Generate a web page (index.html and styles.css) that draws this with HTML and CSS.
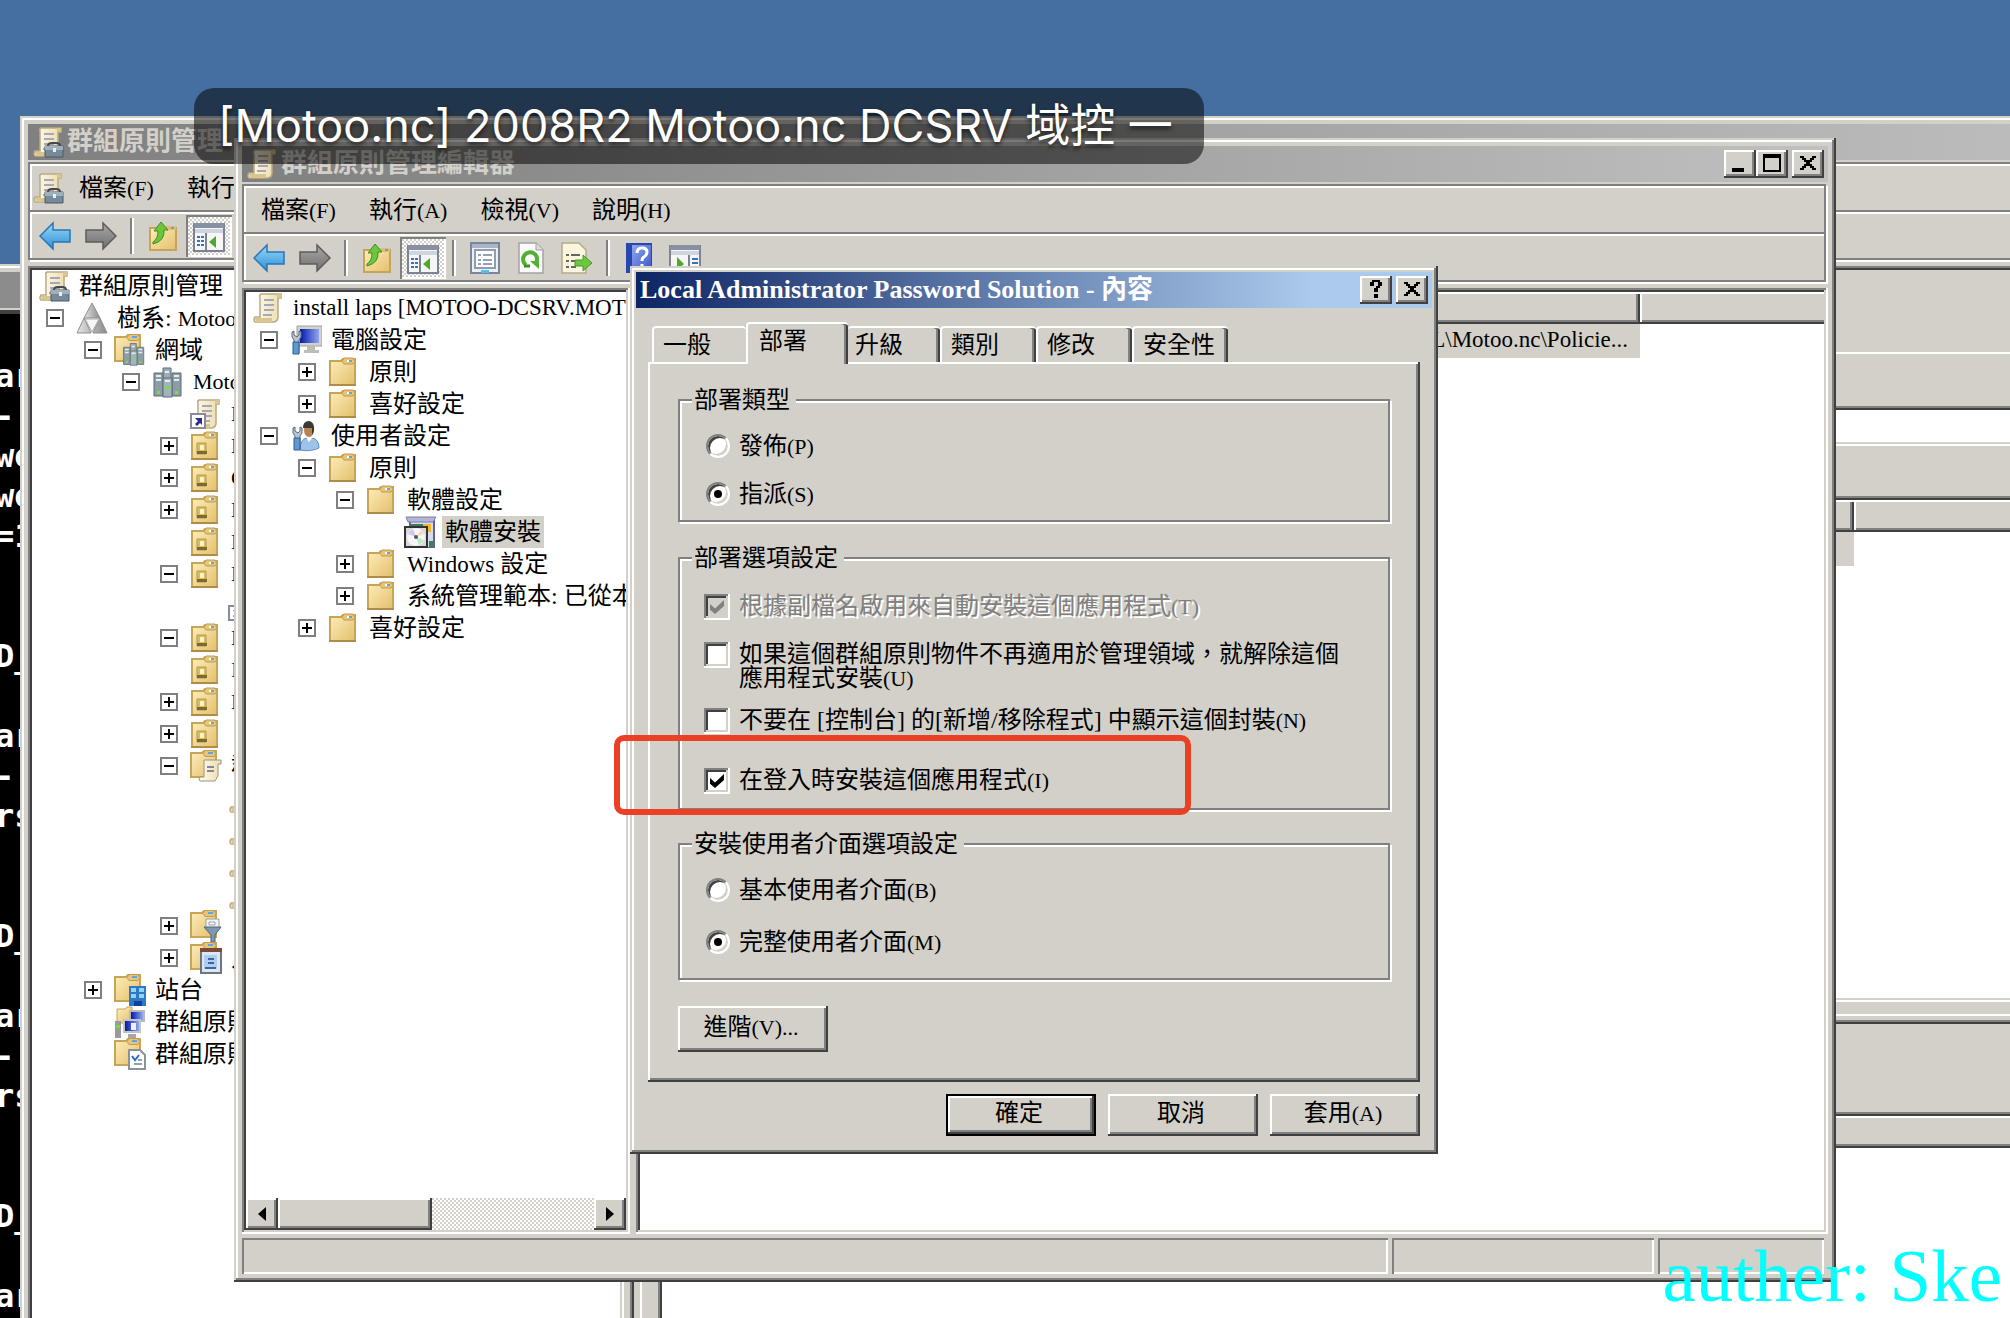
FILE: index.html
```html
<!DOCTYPE html>
<html lang="zh-Hant-TW">
<head>
<meta charset="utf-8">
<title>群組原則管理編輯器</title>
<link rel="stylesheet" href="styles.css">
</head>
<body>
<svg class="defs" aria-hidden="true">
  <defs>
    <linearGradient id="gFolder" x1="0" y1="0" x2="1" y2="1"><stop offset="0" stop-color="#fdeebb"/><stop offset="1" stop-color="#e3bf6c"/></linearGradient>
    <linearGradient id="gBlue" x1="0" y1="0" x2="0" y2="1"><stop offset="0" stop-color="#9bd8f8"/><stop offset="1" stop-color="#2b8fd8"/></linearGradient>
    <linearGradient id="gGray" x1="0" y1="0" x2="0" y2="1"><stop offset="0" stop-color="#a8a8a8"/><stop offset="1" stop-color="#6f6f6f"/></linearGradient>
    <linearGradient id="gScreen" x1="0" y1="0" x2="1" y2="0"><stop offset="0" stop-color="#0418a8"/><stop offset="1" stop-color="#8fa8f0"/></linearGradient>
    <linearGradient id="gPaper" x1="0" y1="0" x2="1" y2="0"><stop offset="0" stop-color="#fffdf0"/><stop offset="1" stop-color="#ecdcae"/></linearGradient>
    <linearGradient id="gHelp" x1="0" y1="0" x2="1" y2="1"><stop offset="0" stop-color="#8fa6ee"/><stop offset="1" stop-color="#3a58c8"/></linearGradient>
    <linearGradient id="gTri" x1="0" y1="0" x2="1" y2="0"><stop offset="0" stop-color="#e4e4e4"/><stop offset="1" stop-color="#8a8a8a"/></linearGradient>
  </defs>
  <symbol id="folder" viewBox="0 0 32 32">
    <path d="M2 5h11l2-2h12v26H2z" fill="url(#gFolder)" stroke="#c8a458" stroke-width="2"/>
    <path d="M14 5.500l2-3.500h9l2 3.500-2 2.500h-9z" fill="#e6c47a" stroke="#c39b4c"/>
    <path d="M19 4h5v2h-5z" fill="#5fa5e6"/><path d="M19 4h2v2h-2z" fill="#fff"/>
    <path d="M1 28h27v2H1z" fill="#b08c48"/>
  </symbol>
  <symbol id="folder-small" viewBox="0 0 32 32">
    <path d="M1 3h11l2-2h12v26H1z" fill="url(#gFolder)" stroke="#c8a458" stroke-width="2"/>
    <path d="M13 3.500l2-3h8l3 3-2 3h-9z" fill="#e6c47a" stroke="#c39b4c"/>
    <path d="M18 2h5v2h-5z" fill="#5fa5e6"/>
  </symbol>
  <symbol id="folder-ou" viewBox="0 0 32 32">
    <use href="#folder"/>
    <path d="M7 13h9v11H7z" fill="#d8bb62" stroke="#b89a4a"/><path d="M10 15h4v5h-4z" fill="#fff6c4"/><path d="M7 21h10v3H7z" fill="#7d6a2c"/>
  </symbol>
  <symbol id="scroll" viewBox="0 0 32 32">
    <path d="M9 2h20v4h-3v20q-1 4-5 4H3q-2-2 0-5h5V6q-1-3 1-4z" fill="url(#gPaper)" stroke="#b9ab84" stroke-width="1.500"/>
    <path d="M25 2h4v4h-4zM3 26h17v4H4z" fill="#d8c68c"/>
    <path d="M12 8h10M12 13h10M12 18h10M11 23h9" stroke="#a7a7b8" stroke-width="2"/>
  </symbol>
  <symbol id="scroll-box" viewBox="0 0 32 32">
    <use href="#scroll"/>
    <path d="M16 20q0-3 4-3h4q4 0 4 3" fill="none" stroke="#404850" stroke-width="2"/>
    <path d="M13 20h18v11H13z" fill="#77899a" stroke="#4a5866"/><path d="M13 20h18v4H13z" fill="#9fb0bd"/><path d="M21 22h3v4h-3z" fill="#e8eef2"/>
  </symbol>
  <symbol id="scroll-link" viewBox="0 0 32 32">
    <use href="#scroll"/>
    <path d="M1 16h14v14H1z" fill="#fff" stroke="#8a8a9a" stroke-width="2"/><path d="M5 20h7v7l-2-2-3 3-2-2 3-3z" fill="#2b2b8c"/>
  </symbol>
  <symbol id="folder-scroll" viewBox="0 0 32 32">
    <use href="#folder-small"/>
    <path d="M14 10h17v4h-3v12l-3 5H10q-2-2 0-4h4z" fill="url(#gPaper)" stroke="#9c9480"/><path d="M17 17h7M17 21h7" stroke="#85859c" stroke-width="2"/>
  </symbol>
  <symbol id="folder-filter" viewBox="0 0 32 32">
    <use href="#folder-small"/>
    <path d="M16 9h13v9H16z" fill="#f4f4f4" stroke="#a0a0a0"/><path d="M19 12h6v3h-6z" fill="none" stroke="#a0a0b0"/>
    <path d="M14 17h17l-6 8v7h-4v-7z" fill="#7b98ae" stroke="#4e6679"/>
  </symbol>
  <symbol id="folder-starter" viewBox="0 0 32 32">
    <use href="#folder-small"/>
    <path d="M11 8h20v23H11z" fill="#dfe6ee" stroke="#6b7585" stroke-width="2"/><path d="M10 6h22v4H10z" fill="#7a4a3a"/><path d="M14 13h13v14H14z" fill="#aecdf0"/><path d="M18 17h6M18 21h6M15 26h11" stroke="#3b66a6" stroke-width="2"/>
  </symbol>
  <symbol id="folder-site" viewBox="0 0 32 32">
    <use href="#folder-small"/>
    <path d="M15 12h17v20H15z" fill="#2f78c8"/><path d="M17 14h5v4h-5zM25 14h5v4h-5zM17 20h5v4h-5zM25 20h5v4h-5z" fill="#8fd6f2"/><path d="M20 27h8v5h-8z" fill="#123f9a"/>
  </symbol>
  <symbol id="folder-result" viewBox="0 0 32 32">
    <use href="#folder-small"/>
    <path d="M15 12h11l5 5v14H15z" fill="#fff" stroke="#8a929a" stroke-width="2"/><path d="M18 18l3 4 4-5" fill="none" stroke="#2b6cc0" stroke-width="2"/><path d="M20 26h8M24 22h4" stroke="#8da2b8" stroke-width="2"/>
  </symbol>
  <symbol id="modeling" viewBox="0 0 32 32">
    <path d="M3 3h8l2-2h5v16H3z" fill="url(#gFolder)" stroke="#c8a458"/>
    <path d="M15 4h16v12H15z" fill="#b8b8b8"/><path d="M17 6h12v8H17z" fill="url(#gScreen)"/>
    <path d="M9 13h18v14H9z" fill="#c4c4c4"/><path d="M11 15h14v10H11z" fill="url(#gScreen)"/><path d="M17 17h5v7h-5z" fill="#eef"/>
    <path d="M14 28h8v4h-8z" fill="#a8a8a8"/><path d="M1 15h6v17H1z" fill="#9a9a9a"/><path d="M2 19h4v3H2z" fill="#6fe040"/>
  </symbol>
  <symbol id="forest" viewBox="0 0 32 32">
    <path d="M16 1l8 15H8z" fill="url(#gTri)" stroke="#8f8f8f"/><path d="M8 16l7 15H1zM24 16l7 15H17z" fill="url(#gTri)" stroke="#8f8f8f"/><path d="M9 17h14l-7 13z" fill="#f6f6f6" stroke="#aaa"/>
  </symbol>
  <symbol id="servers" viewBox="0 0 32 32">
    <g stroke="#5d6d76"><path d="M11 2h8v24h-8z" fill="#9dacb4"/><path d="M2 7h9v23H2zM20 7h9v23h-9z" fill="#8c9da6"/><path d="M11 12h9v19h-9z" fill="#a3b3bb"/></g>
    <path d="M4 10h5M4 14h5M22 10h5M22 14h5M13 15h5M13 6h4" stroke="#e4edf1" stroke-width="2"/>
    <path d="M5 25h3v3H5zM23 25h3v3h-3zM14 20h3v3h-3z" fill="#70e23a"/>
  </symbol>
  <symbol id="folder-servers" viewBox="0 0 32 32">
    <use href="#folder-small"/><use href="#servers" x="8" y="8" width="24" height="24"/>
  </symbol>
  <symbol id="wrench" viewBox="0 0 12 32">
    <path d="M2 8v5l2 3v13h5V16l2-3V8L9 7v4l-2 2-3-2V7z" fill="#b9c4cf" stroke="#5b6b7c"/><path d="M3 18h6v12H3z" fill="#5e9ad0" stroke="#2e5c90"/>
  </symbol>
  <symbol id="computer" viewBox="0 0 32 32">
    <path d="M7 2h25v20H7z" fill="#d2d2cc" stroke="#a2a29c"/><path d="M10 5h19v14H10z" fill="url(#gScreen)"/><path d="M17 22h8v4h4v3H14v-3h3z" fill="#bdbdb6"/>
    <use href="#wrench" x="0" y="0" width="12" height="32"/>
  </symbol>
  <symbol id="user" viewBox="0 0 32 32">
    <path d="M10 30q0-11 7-12h5q7 1 7 10-8 4-19 2z" fill="#9dc3ea" stroke="#5f8fc4"/><path d="M16 17l3 5 4-5z" fill="#fff"/>
    <ellipse cx="19" cy="10" rx="5" ry="7" fill="#b98252"/><path d="M13 8q0-7 6-7 6 1 5 10l-2 4V8q-4 0-9 0z" fill="#3a3a34"/>
    <use href="#wrench" x="1" y="0" width="12" height="32"/>
  </symbol>
  <symbol id="software" viewBox="0 0 32 32">
    <path d="M6 4h24v28H6z" fill="#d6daf4" stroke="#62628e" stroke-width="2"/><path d="M2 1h30l-3 5H4z" fill="#b5b6d6" stroke="#7b7ca8"/><path d="M5 8h16v4H5z" fill="#3e7d58"/><path d="M19 8h8v8h-8z" fill="#f1b62c"/><path d="M25 25h4v6h-4z" fill="#3e8050"/>
    <path d="M1 11h22v20H1z" fill="#d9d9d9" stroke="#333" stroke-width="2"/><circle cx="12" cy="21" r="9" fill="#f7f7f7"/><path d="M12 21l-8-3a8 8 0 0 1 5-5z" fill="#d8c4ee"/><path d="M12 21l8 3a8 8 0 0 1-5 5z" fill="#bdeccb"/><path d="M12 21l5-7a8 8 0 0 1 3 4z" fill="#f6d5c2"/><circle cx="12" cy="21" r="2" fill="#555"/>
  </symbol>
  <symbol id="back" viewBox="0 0 32 32"><path d="M1 16L14 3v7h17v12H14v7z" fill="url(#gBlue)" stroke="#2876b4" stroke-width="1.500"/></symbol>
  <symbol id="forward" viewBox="0 0 32 32"><path d="M31 16L18 3v7H1v12h17v7z" fill="url(#gGray)" stroke="#5c5c5c" stroke-width="1.500"/></symbol>
  <symbol id="up" viewBox="0 0 32 32">
    <path d="M3 8h26v22H3z" fill="url(#gFolder)" stroke="#c8a458" stroke-width="2"/><path d="M18 6h11v4H18z" fill="#e0bd70"/><path d="M24 7h3v2h-3z" fill="#5fa5e6"/>
    <path d="M6 22q5-3 5-11H7l7-9 7 8h-4q1 11-11 14z" fill="#6cc63c" stroke="#3d8f1c"/>
  </symbol>
  <symbol id="tree-pane" viewBox="0 0 32 32">
    <path d="M1 4h30v27H1z" fill="#f6f6f6" stroke="#7a8494" stroke-width="2"/><path d="M1 3h30v5H1z" fill="#8791a3"/><path d="M2 9h28v4H2z" fill="#cfd5df"/><path d="M13 13v17" stroke="#7a8494" stroke-width="2"/><path d="M4 17h3M4 21h3M4 25h3M8 17h3M8 21h3M8 25h3" stroke="#3a72b8" stroke-width="2"/><path d="M16 22l7-6v12z" fill="#4faa2c"/>
  </symbol>
  <symbol id="action-pane" viewBox="0 0 32 32">
    <path d="M1 4h30v27H1z" fill="#f6f6f6" stroke="#7a8494" stroke-width="2"/><path d="M1 3h30v5H1z" fill="#8791a3"/><path d="M2 9h28v4H2z" fill="#cfd5df"/><path d="M20 13v17" stroke="#7a8494" stroke-width="2"/><path d="M23 17h6M23 21h6" stroke="#3a72b8" stroke-width="2"/><path d="M15 22l-7-7v13z" fill="#4faa2c"/>
  </symbol>
  <symbol id="props" viewBox="0 0 32 32">
    <path d="M2 1h28v30H2z" fill="#eceff3" stroke="#7a8698" stroke-width="2"/><path d="M3 2h26v4H3z" fill="#aab4c6"/><path d="M6 8h20v18H6z" fill="#fff" stroke="#8f9db2" stroke-width="2"/><path d="M9 13h3M9 18h3M9 22h3M14 13h9M14 18h9M14 22h9" stroke="#8fa0b8" stroke-width="2"/><path d="M12 28h8v3h-8z" fill="#4ec2ee"/>
  </symbol>
  <symbol id="refresh" viewBox="0 0 32 32">
    <path d="M4 1h17l7 7v23H4z" fill="#fafafa" stroke="#a2a2a2" stroke-width="1.500"/><path d="M21 1v7h7" fill="#ddd" stroke="#a2a2a2"/><path d="M11 23a7 7 0 1 1 10-2" fill="none" stroke="#53b032" stroke-width="4"/><path d="M15 19h9v8z" fill="#53b032"/><path d="M9 24h6" stroke="#3d8f1c" stroke-width="3"/>
  </symbol>
  <symbol id="export" viewBox="0 0 32 32">
    <path d="M1 1h17l7 7v23H1z" fill="#fbf5de" stroke="#b6ab86" stroke-width="1.500"/><path d="M5 13h3M5 19h3M5 25h3M10 13h9M10 19h5M10 25h5" stroke="#666" stroke-width="2"/><path d="M14 18h8v-5l9 8-9 8v-5h-8z" fill="#6dc63f" stroke="#4a9b26"/>
  </symbol>
  <symbol id="help" viewBox="0 0 32 32">
    <path d="M3 1h26v30H3z" fill="#2846b0"/><path d="M9 3h19v26H9z" fill="url(#gHelp)"/><path d="M14 11q0-5 5-5 5 0 5 4 0 3-3 5-2 1-2 4M19 22v3" fill="none" stroke="#fff" stroke-width="3"/>
  </symbol>
  <symbol id="glyph-close" viewBox="0 0 16 14"><path d="M0 0h4v2h2v2h4V2h2V0h4v2h-2v2h-2v2h-2v2h2v2h2v2h2v2h-4v-2h-2v-2H6v2H4v2H0v-2h2v-2h2V8h2V6H4V4H2V2H0z" fill="#000"/></symbol>
  <symbol id="glyph-max" viewBox="0 0 18 18"><path d="M0 0h18v18H0zM2 4v12h14V4z" fill="#000" fill-rule="evenodd"/></symbol>
  <symbol id="glyph-help" viewBox="0 0 12 18"><path d="M0 2h2V0h8v2h2v4h-2v2H8v4H4V8h2V6h2V2H4v4H0zM4 14h4v4H4z" fill="#000" fill-rule="evenodd"/></symbol>
</svg>

<main class="desktop">

  <section class="window console">
    <div class="console-title"></div>
<pre class="console-text">

ar
-
we
we
=1


D_

ar
-
rs


D_

ar
-
rs


D_

ar</pre>
  </section>

  <section class="window manager">
    <header class="titlebar"><svg class="icon"><use href="#scroll-box"/></svg><h2>群組原則管理</h2></header>
    <div class="bars">
      <nav class="menubar menubar-icon"><svg class="icon"><use href="#scroll-box"/></svg><button>檔案<span class="key">(F)</span></button><button>執行</button></nav>
      <div class="toolbar">
        <button aria-label="上一頁"><svg class="icon"><use href="#back"/></svg></button>
        <button aria-label="下一頁"><svg class="icon"><use href="#forward"/></svg></button>
        <i class="sep"></i>
        <button aria-label="上移一層"><svg class="icon"><use href="#up"/></svg></button>
        <button class="pressed" aria-label="主控台樹狀目錄"><svg class="icon"><use href="#tree-pane"/></svg></button>
      </div>
    </div>
    <div class="panes">
      <div class="sunken tree-pane">
        <ul class="tree">
          <li class="l0"><svg class="icon"><use href="#scroll-box"/></svg><span>群組原則管理</span></li>
          <li class="l1"><i class="box minus"></i><svg class="icon"><use href="#forest"/></svg><span>樹系: <span class="key">Motoo</span></span></li>
          <li class="l2"><i class="box minus"></i><svg class="icon"><use href="#folder-servers"/></svg><span>網域</span></li>
          <li class="l3"><i class="box minus"></i><svg class="icon"><use href="#servers"/></svg><span class="key">Motoo</span></li>
          <li class="l4"><svg class="icon"><use href="#scroll-link"/></svg><span class="key">D</span></li>
          <li class="l4"><i class="box plus"></i><svg class="icon"><use href="#folder-ou"/></svg><span class="key">D</span></li>
          <li class="l4"><i class="box plus"></i><svg class="icon"><use href="#folder-ou"/></svg><span class="key">C</span></li>
          <li class="l4"><i class="box plus"></i><svg class="icon"><use href="#folder-ou"/></svg><span class="key">D</span></li>
          <li class="l4"><svg class="icon"><use href="#folder-ou"/></svg><span class="key">D</span></li>
          <li class="l4"><i class="box minus"></i><svg class="icon"><use href="#folder-ou"/></svg><span class="key">D</span></li>
          <li class="l5"><svg class="icon"><use href="#scroll-link"/></svg></li>
          <li class="l4"><i class="box minus"></i><svg class="icon"><use href="#folder-ou"/></svg><span class="key">D</span></li>
          <li class="l4"><svg class="icon"><use href="#folder-ou"/></svg><span class="key">I</span></li>
          <li class="l4"><i class="box plus"></i><svg class="icon"><use href="#folder-ou"/></svg><span class="key">D</span></li>
          <li class="l4"><i class="box plus"></i><svg class="icon"><use href="#folder-ou"/></svg></li>
          <li class="l4"><i class="box minus"></i><svg class="icon"><use href="#folder-scroll"/></svg><span>群</span></li>
          <li class="l5"><svg class="icon"><use href="#scroll"/></svg></li>
          <li class="l5"><svg class="icon"><use href="#scroll"/></svg></li>
          <li class="l5"><svg class="icon"><use href="#scroll"/></svg></li>
          <li class="l5"><svg class="icon"><use href="#scroll"/></svg></li>
          <li class="l4"><i class="box plus"></i><svg class="icon"><use href="#folder-filter"/></svg></li>
          <li class="l4"><i class="box plus"></i><svg class="icon"><use href="#folder-starter"/></svg><span>入</span></li>
          <li class="l2"><i class="box plus"></i><svg class="icon"><use href="#folder-site"/></svg><span>站台</span></li>
          <li class="l2"><svg class="icon"><use href="#modeling"/></svg><span>群組原則</span></li>
          <li class="l2"><svg class="icon"><use href="#folder-result"/></svg><span>群組原則</span></li>
        </ul>
      </div>
      <div class="sunken details">
        <div class="details-head"></div>
        <div class="sheet links">
          <div class="sheet-gap"></div>
          <div class="sunken location"></div>
          <div class="list-gap"></div>
          <div class="sunken link-list">
            <div class="colhead"><i></i><i></i></div>
            <div class="row-mark"></div>
          </div>
        </div>
        <div class="sheet filters">
          <div class="sunken filter-list">
            <div class="filter-note"></div>
            <div class="colhead"><i></i></div>
          </div>
        </div>
      </div>
    </div>
  </section>

  <section class="window editor">
    <header class="titlebar">
      <svg class="icon"><use href="#scroll"/></svg><h2>群組原則管理編輯器</h2>
      <div class="caption-buttons">
        <button aria-label="最小化"><i class="min"></i></button><button aria-label="最大化"><svg class="max"><use href="#glyph-max"/></svg></button><button class="close" aria-label="關閉"><svg><use href="#glyph-close"/></svg></button>
      </div>
    </header>
    <div class="bars">
      <nav class="menubar"><button>檔案<span class="key">(F)</span></button><button>執行<span class="key">(A)</span></button><button>檢視<span class="key">(V)</span></button><button>說明<span class="key">(H)</span></button></nav>
      <div class="toolbar">
        <button aria-label="上一頁"><svg class="icon"><use href="#back"/></svg></button>
        <button aria-label="下一頁"><svg class="icon"><use href="#forward"/></svg></button>
        <i class="sep"></i>
        <button aria-label="上移一層"><svg class="icon"><use href="#up"/></svg></button>
        <button class="pressed" aria-label="主控台樹狀目錄"><svg class="icon"><use href="#tree-pane"/></svg></button>
        <i class="sep"></i>
        <button aria-label="內容"><svg class="icon"><use href="#props"/></svg></button>
        <button aria-label="重新整理"><svg class="icon"><use href="#refresh"/></svg></button>
        <button aria-label="匯出清單"><svg class="icon"><use href="#export"/></svg></button>
        <i class="sep"></i>
        <button aria-label="說明"><svg class="icon"><use href="#help"/></svg></button>
        <button aria-label="執行窗格"><svg class="icon"><use href="#action-pane"/></svg></button>
      </div>
    </div>
    <div class="panes">
      <div class="sunken tree-pane">
        <ul class="tree">
          <li class="l0"><svg class="icon"><use href="#scroll"/></svg><span class="wide">install laps [MOTOO-DCSRV.MOT</span></li>
          <li class="l1"><i class="box minus"></i><svg class="icon"><use href="#computer"/></svg><span>電腦設定</span></li>
          <li class="l2"><i class="box plus"></i><svg class="icon"><use href="#folder"/></svg><span>原則</span></li>
          <li class="l2"><i class="box plus"></i><svg class="icon"><use href="#folder"/></svg><span>喜好設定</span></li>
          <li class="l1"><i class="box minus"></i><svg class="icon"><use href="#user"/></svg><span>使用者設定</span></li>
          <li class="l2"><i class="box minus"></i><svg class="icon"><use href="#folder"/></svg><span>原則</span></li>
          <li class="l3"><i class="box minus"></i><svg class="icon"><use href="#folder"/></svg><span>軟體設定</span></li>
          <li class="l4"><svg class="icon"><use href="#software"/></svg><span class="selected">軟體安裝</span></li>
          <li class="l3"><i class="box plus"></i><svg class="icon"><use href="#folder"/></svg><span><span class="wide">Windows</span> 設定</span></li>
          <li class="l3"><i class="box plus"></i><svg class="icon"><use href="#folder"/></svg><span>系統管理範本: 已從本</span></li>
          <li class="l2"><i class="box plus"></i><svg class="icon"><use href="#folder"/></svg><span>喜好設定</span></li>
        </ul>
        <div class="hscroll">
          <button aria-label="向左捲動"><i class="arrow-left"></i></button>
          <div class="thumb"></div>
          <div class="track"></div>
          <button aria-label="向右捲動"><i class="arrow-right"></i></button>
        </div>
      </div>
      <div class="sunken packages">
        <div class="colhead"><i></i><i></i></div>
        <div class="package-row"><span class="wide">L\Motoo.nc\Policie...</span></div>
      </div>
    </div>
    <footer class="statusbar"><div></div><div></div><div></div></footer>
  </section>

  <form class="window dialog">
    <header class="titlebar">
      <h2>Local Administrator Password Solution - 內容</h2>
      <div class="caption-buttons">
        <button type="button" aria-label="說明"><svg class="ask"><use href="#glyph-help"/></svg></button><button type="button" class="close" aria-label="關閉"><svg><use href="#glyph-close"/></svg></button>
      </div>
    </header>
    <div class="dialog-body">
      <div class="tabs" role="tablist">
        <button type="button" role="tab">一般</button><button type="button" role="tab" class="active" aria-selected="true">部署</button><button type="button" role="tab">升級</button><button type="button" role="tab">類別</button><button type="button" role="tab">修改</button><button type="button" role="tab">安全性</button>
      </div>
      <div class="tab-page">
        <fieldset class="type">
          <legend>部署類型</legend>
          <label><input type="radio" name="type"><span>發佈<span class="key">(P)</span></span></label>
          <label><input type="radio" name="type" checked><span>指派<span class="key">(S)</span></span></label>
        </fieldset>
        <fieldset class="options">
          <legend>部署選項設定</legend>
          <label class="disabled"><input type="checkbox" checked disabled><span>根據副檔名啟用來自動安裝這個應用程式<span class="key">(T)</span></span></label>
          <label><input type="checkbox"><span>如果這個群組原則物件不再適用於管理領域，就解除這個應用程式安裝<span class="key">(U)</span></span></label>
          <label><input type="checkbox"><span>不要在 [控制台] 的[新增/移除程式] 中顯示這個封裝<span class="key">(N)</span></span></label>
          <label class="logon"><input type="checkbox" checked><span>在登入時安裝這個應用程式<span class="key">(I)</span></span></label>
        </fieldset>
        <fieldset class="ui">
          <legend>安裝使用者介面選項設定</legend>
          <label><input type="radio" name="ui"><span>基本使用者介面<span class="key">(B)</span></span></label>
          <label><input type="radio" name="ui" checked><span>完整使用者介面<span class="key">(M)</span></span></label>
        </fieldset>
        <button type="button" class="push advanced">進階<span class="key">(V)...</span></button>
      </div>
      <div class="actions">
        <button type="button" class="push default">確定</button>
        <button type="button" class="push">取消</button>
        <button type="button" class="push">套用<span class="key">(A)</span></button>
      </div>
    </div>
  </form>

  <div class="highlight"></div>
  <div class="banner">[Motoo.nc] 2008R2 Motoo.nc DCSRV 域控 一</div>
  <div class="watermark">auther: Ske</div>
</main>
</body>
</html>
```
FILE: styles.css
```css
:root {
  --face: #d3d0c9;
  --shade: #808080;
  --dark: #404040;
  --light: #ffffff;
}

* { box-sizing: border-box; }

body {
  margin: 0;
  font-family: "Liberation Serif", "Noto Sans CJK TC", serif;
  font-size: 24px;
  line-height: 24px;
  color: #000;
}

button, input { font: inherit; color: inherit; margin: 0; }
button { padding: 0; border: 0; background: none; white-space: nowrap; }
h2 { margin: 0; font-size: 26px; line-height: 36px; white-space: nowrap; }

.key { font-size: 22px; line-height: 0; }
.wide { font-size: 23px; line-height: 0; }
.defs { position: absolute; width: 0; height: 0; }
.icon { display: block; flex: none; width: 32px; height: 32px; }

.desktop {
  position: relative;
  height: 100vh;
  overflow: hidden;
  background: #456fa1;
}

/* Windows */
.window {
  position: absolute;
  display: flex;
  flex-direction: column;
  padding: 8px;
  background: var(--face);
  box-shadow: inset -2px -2px var(--dark), inset 2px 2px var(--face), inset -4px -4px var(--shade), inset 4px 4px var(--light);
}

.console { left: -200px; top: 264px; width: 800px; bottom: -40px; }
.manager { left: 20px; top: 116px; right: -160px; bottom: -40px; }
.editor { left: 234px; top: 138px; width: 1602px; height: 1144px; }
.dialog { left: 630px; top: 266px; width: 808px; padding: 6px 6px 4px; }

.titlebar {
  display: flex;
  align-items: center;
  flex: none;
  height: 36px;
  padding: 0 4px;
  gap: 3px;
  color: var(--face);
  background: linear-gradient(90deg, #808080, #c0c0c0);
}
.dialog .titlebar { color: #fff; background: linear-gradient(90deg, #0e2564, #abcaec 85%); }

.caption-buttons { display: flex; margin-left: auto; }
.caption-buttons button {
  display: flex;
  align-items: center;
  justify-content: center;
  width: 32px;
  height: 28px;
  padding: 0 0 2px;
}
.caption-buttons .close { margin-left: 4px; }
.caption-buttons svg { width: 16px; height: 14px; }
.caption-buttons .max { width: 18px; height: 18px; }
.caption-buttons .ask { width: 12px; height: 18px; }
.min { width: 12px; height: 4px; margin: 14px 4px 0 0; background: #000; }

.caption-buttons button, .push, .hscroll button, .thumb {
  background: var(--face);
  box-shadow: inset -2px -2px var(--dark), inset 2px 2px var(--light), inset -4px -4px var(--shade);
}

.sunken {
  padding: 4px;
  background: #fff;
  box-shadow: inset -2px -2px var(--light), inset 2px 2px var(--shade), inset -4px -4px var(--face), inset 4px 4px var(--dark);
}

/* Console */
.console {
  padding: 8px 0;
  background: linear-gradient(var(--face) 2px, #fff 2px 4px, var(--face) 4px 46px, var(--dark) 46px 50px, #000 50px);
  box-shadow: none;
}
.console-title { flex: none; height: 36px; background: #8c8c8c; }
.console-text {
  margin: 8px 0 0 195px;
  font: bold 32px/40px "DejaVu Sans Mono", monospace;
  color: #fff;
}

/* Menu and tool bars */
.bars {
  flex: none;
  margin: 2px 2px 6px 0;
  border: 2px solid var(--shade);
  box-shadow: 2px 2px var(--light), inset 2px 2px var(--light);
}
.menubar {
  display: flex;
  align-items: center;
  gap: 33px;
  height: 46px;
  padding: 2px 17px 0;
}
.menubar-icon { padding-left: 2px; }
.menubar-icon .icon { margin-right: -18px; }
.toolbar {
  display: flex;
  align-items: center;
  height: 48px;
  padding: 2px 2px 0;
  border-top: 2px solid var(--shade);
  box-shadow: inset 0 2px var(--light);
}
.toolbar button { display: flex; align-items: center; justify-content: center; flex: none; width: 46px; height: 42px; }
.toolbar .pressed {
  background: repeating-conic-gradient(#fff 0 25%, var(--face) 0 50%) 0 0 / 4px 4px;
  box-shadow: inset 2px 2px var(--shade), inset -2px -2px var(--light);
}
.sep { flex: none; width: 4px; height: 36px; margin: 0 6px; border-left: 2px solid var(--shade); border-right: 2px solid var(--light); }

/* Panes */
.panes { display: flex; flex: 1; gap: 6px; min-height: 0; }
.tree-pane { display: flex; flex: none; flex-direction: column; justify-content: space-between; width: 596px; }
.editor .tree-pane { width: 388px; }
.editor .panes { margin-bottom: 4px; }

.tree { margin: 0; padding: 0; list-style: none; overflow: hidden; }
.tree li { display: flex; align-items: center; height: 32px; white-space: nowrap; }
.tree li > span { margin-left: 6px; padding: 0 3px; line-height: 32px; }
.tree .selected { background: var(--face); }
.l0 { padding-left: 6px; }
.l1 { padding-left: 44px; }
.l2 { padding-left: 82px; }
.l3 { padding-left: 120px; }
.l4 { padding-left: 158px; }
.l5 { padding-left: 196px; }

.box {
  flex: none;
  width: 18px;
  height: 18px;
  margin: 0 12px 0 -30px;
  border: 2px solid var(--shade);
  background: linear-gradient(#000, #000) center / 10px 2px no-repeat;
}
.plus { background: linear-gradient(#000, #000) center / 10px 2px no-repeat, linear-gradient(#000, #000) center / 2px 10px no-repeat; }

.hscroll { display: flex; flex: none; height: 32px; }
.hscroll button { display: flex; align-items: center; justify-content: center; width: 32px; height: 32px; }
.thumb { width: 154px; }
.track { flex: 1; background: repeating-conic-gradient(#fff 0 25%, var(--face) 0 50%) 0 0 / 4px 4px; }
.arrow-left, .arrow-right { width: 8px; height: 14px; background: #000; clip-path: polygon(0 50%, 100% 0, 100% 100%); }
.arrow-right { clip-path: polygon(0 0, 100% 50%, 0 100%); }

.packages { flex: 1; min-width: 0; }
.colhead { display: flex; height: 32px; background: var(--face); }
.colhead i { box-shadow: inset 0 -2px var(--dark), inset 0 2px var(--light), inset 2px 0 var(--light), inset -2px 0 var(--dark), inset -4px -4px var(--shade); }
.colhead i:first-child { width: 1000px; }
.colhead i:last-child { flex: 1; box-shadow: inset 0 -2px var(--dark), inset 0 2px var(--light), inset 2px 0 var(--light), inset 0 -4px var(--shade); }
.package-row { width: 1000px; height: 34px; padding: 0 12px; line-height: 30px; text-align: right; background: var(--face); }

.statusbar { display: flex; gap: 4px; flex: none; height: 36px; margin-right: 4px; }
.statusbar div { width: 262px; box-shadow: inset 2px 2px var(--shade), inset -2px -2px var(--light); }
.statusbar div:first-child { flex: 1; }
.statusbar div:last-child { width: 166px; }

/* Link details of the management console */
.details { display: flex; flex: 1; flex-direction: column; padding: 4px 10px; background: var(--face); min-width: 0; }
.details-head { height: 82px; }
.sheet { border: solid var(--light); border-width: 2px 0 0 2px; padding: 0 16px; }
.links { height: 662px; }
.sheet-gap { height: 52px; }
.location { height: 40px; }
.list-gap { height: 50px; }
.link-list { height: 506px; }
.link-list .colhead i:first-child { width: 1192px; }
.row-mark { width: 1192px; height: 34px; background: var(--face); }
.filters { flex: 1; padding-top: 4px; }
.filter-list { height: 100%; }
.filter-note { height: 92px; background: var(--face); box-shadow: inset 0 -2px var(--dark), inset 0 -4px var(--shade); }

/* Property sheet */
.dialog-body { padding: 14px 12px; }
.tabs { display: flex; align-items: flex-end; height: 40px; padding-left: 4px; }
.tabs button {
  width: 96px;
  height: 36px;
  padding-left: 9px;
  text-align: left;
  border-top: 2px solid var(--light);
  border-left: 2px solid var(--light);
  border-radius: 4px 4px 0 0;
  box-shadow: inset -2px 0 var(--dark), inset -4px 0 var(--shade);
}
.tabs button:first-child { width: 94px; box-shadow: none; }
.tabs .active {
  position: relative;
  width: 102px;
  height: 42px;
  margin-bottom: -2px;
  padding: 0 0 6px 11px;
  background: var(--face);
}
.tabs .active + button { width: 92px; border-left: 0; padding-left: 7px; }
.tab-page {
  display: flex;
  flex-direction: column;
  align-items: stretch;
  padding: 26px 30px 30px;
  box-shadow: inset -2px -2px var(--dark), inset 2px 2px var(--light), inset -4px -4px var(--shade);
}

fieldset {
  display: flex;
  flex-direction: column;
  gap: 24px;
  min-width: 0;
  margin: 0 0 24px;
  padding: 22px 24px 14px;
  border: 2px solid var(--shade);
  box-shadow: 2px 2px var(--light), inset 2px 2px var(--light);
}
legend { margin-left: -12px; padding: 0 6px 0 2px; background: var(--face); }
.options { gap: 18px; padding: 24px 24px 16px; margin-bottom: 22px; }
.options label:first-of-type { margin-bottom: 6px; }
.options .logon { margin-top: 18px; }
.ui { gap: 28px; padding-bottom: 24px; }

label { display: flex; align-items: flex-start; gap: 9px; }
label > span { max-width: 610px; }
.disabled { color: var(--shade); text-shadow: 2px 2px #fff; }

input { appearance: none; flex: none; display: flex; align-items: center; justify-content: center; background: #fff; }
input[type=radio] {
  width: 24px;
  height: 24px;
  margin: 0 0 0 2px;
  border: 2px solid;
  border-color: var(--shade) #fff #fff var(--shade);
  border-radius: 50%;
  box-shadow: inset 2px 2px var(--dark), inset -2px -2px var(--face);
}
input[type=radio]:checked::before { content: ""; width: 8px; height: 8px; border-radius: 50%; background: #000; }
input[type=checkbox] {
  width: 26px;
  height: 26px;
  margin-bottom: -2px;
  box-shadow: inset -2px -2px var(--light), inset 2px 2px var(--shade), inset -4px -4px var(--face), inset 4px 4px var(--dark);
}
input[type=checkbox]:checked::before {
  content: "";
  width: 14px;
  height: 14px;
  background: #000;
  clip-path: polygon(0 28%, 36% 60%, 100% 0, 100% 42%, 36% 100%, 0 70%);
}
input[type=checkbox]:disabled { background: var(--face); }
input[type=checkbox]:disabled::before { background: var(--shade); }

.push { width: 150px; height: 42px; padding: 0 4px 4px 0; }
.advanced { height: 46px; margin-top: 2px; }
.default { box-shadow: inset 0 0 0 2px #000, inset -4px -4px var(--dark), inset 4px 4px var(--light), inset -6px -6px var(--shade); }
.actions { display: flex; justify-content: flex-end; gap: 12px; margin-top: 12px; }

/* Overlays */
.highlight { position: absolute; left: 614px; top: 735px; width: 577px; height: 80px; border: 6px solid #ec4025; border-radius: 10px; }
.banner {
  position: absolute;
  left: 194px;
  top: 88px;
  width: 1010px;
  height: 76px;
  padding-left: 24px;
  border-radius: 20px;
  background: rgba(0, 0, 0, .52);
  color: #fff;
  font: 45px/76px Inter, "Noto Sans CJK TC", sans-serif;
  white-space: nowrap;
  text-shadow: 0 3px 4px rgba(0, 0, 0, .6);
}
.watermark { position: absolute; right: 8px; bottom: 0; font: 75px/84px "Liberation Serif", serif; color: #0ff; white-space: nowrap; }
```
